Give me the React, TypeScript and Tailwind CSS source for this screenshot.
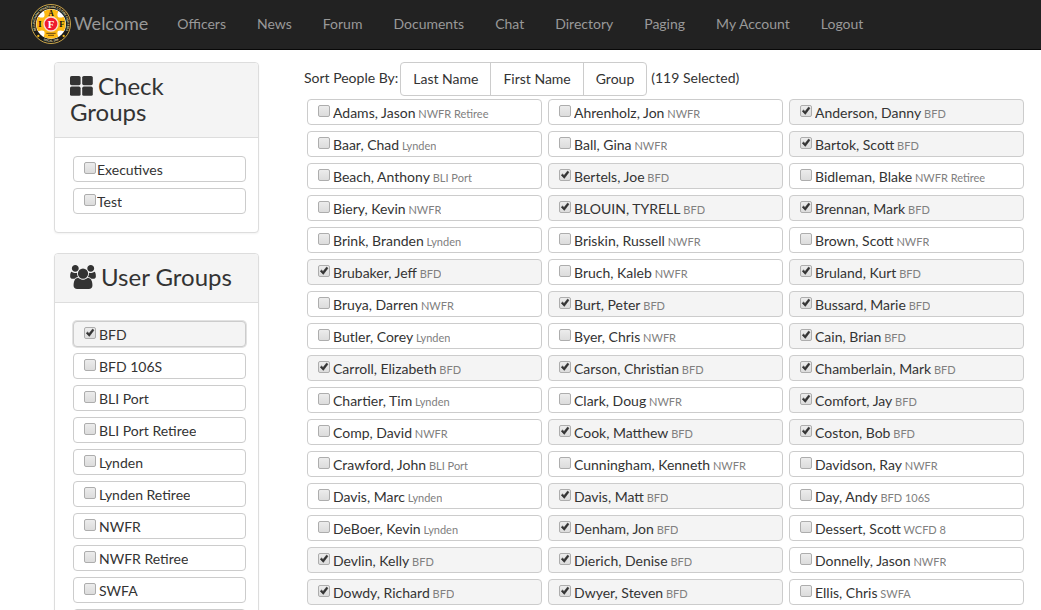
import { useState, type ReactNode } from 'react';

const navItems = ['Officers', 'News', 'Forum', 'Documents', 'Chat', 'Directory', 'Paging', 'My Account', 'Logout'];

const checkGroups = ['Executives', 'Test'];

const userGroups = [
  'BFD',
  'BFD 106S',
  'BLI Port',
  'BLI Port Retiree',
  'Lynden',
  'Lynden Retiree',
  'NWFR',
  'NWFR Retiree',
  'SWFA',
  'WCFD 8',
];

const people: [string, string][] = [
  ['Adams, Jason', 'NWFR Retiree'],
  ['Ahrenholz, Jon', 'NWFR'],
  ['Anderson, Danny', 'BFD'],
  ['Baar, Chad', 'Lynden'],
  ['Ball, Gina', 'NWFR'],
  ['Bartok, Scott', 'BFD'],
  ['Beach, Anthony', 'BLI Port'],
  ['Bertels, Joe', 'BFD'],
  ['Bidleman, Blake', 'NWFR Retiree'],
  ['Biery, Kevin', 'NWFR'],
  ['BLOUIN, TYRELL', 'BFD'],
  ['Brennan, Mark', 'BFD'],
  ['Brink, Branden', 'Lynden'],
  ['Briskin, Russell', 'NWFR'],
  ['Brown, Scott', 'NWFR'],
  ['Brubaker, Jeff', 'BFD'],
  ['Bruch, Kaleb', 'NWFR'],
  ['Bruland, Kurt', 'BFD'],
  ['Bruya, Darren', 'NWFR'],
  ['Burt, Peter', 'BFD'],
  ['Bussard, Marie', 'BFD'],
  ['Butler, Corey', 'Lynden'],
  ['Byer, Chris', 'NWFR'],
  ['Cain, Brian', 'BFD'],
  ['Carroll, Elizabeth', 'BFD'],
  ['Carson, Christian', 'BFD'],
  ['Chamberlain, Mark', 'BFD'],
  ['Chartier, Tim', 'Lynden'],
  ['Clark, Doug', 'NWFR'],
  ['Comfort, Jay', 'BFD'],
  ['Comp, David', 'NWFR'],
  ['Cook, Matthew', 'BFD'],
  ['Coston, Bob', 'BFD'],
  ['Crawford, John', 'BLI Port'],
  ['Cunningham, Kenneth', 'NWFR'],
  ['Davidson, Ray', 'NWFR'],
  ['Davis, Marc', 'Lynden'],
  ['Davis, Matt', 'BFD'],
  ['Day, Andy', 'BFD 106S'],
  ['DeBoer, Kevin', 'Lynden'],
  ['Denham, Jon', 'BFD'],
  ['Dessert, Scott', 'WCFD 8'],
  ['Devlin, Kelly', 'BFD'],
  ['Dierich, Denise', 'BFD'],
  ['Donnelly, Jason', 'NWFR'],
  ['Dowdy, Richard', 'BFD'],
  ['Dwyer, Steven', 'BFD'],
  ['Ellis, Chris', 'SWFA'],
];

function Logo() {
  return (
    <svg viewBox="0 0 120 120" className="size-10 shrink-0" aria-hidden="true">
      <defs>
        <path id="ring-top" d="M21 88 A48 48 0 1 1 99 88" />
        <path id="ring-bottom" d="M28 103 A54 54 0 0 0 92 103" />
      </defs>
      <circle cx="60" cy="60" r="58.5" fill="#1a1a18" stroke="#c9a54a" strokeWidth="3" />
      <text fill="#efe0ae" fontSize="9" fontWeight="700" fontFamily="Lato, sans-serif">
        <textPath href="#ring-top" startOffset="50%" textAnchor="middle">
          BELLINGHAM WHATCOM CO FIRE FIGHTERS
        </textPath>
      </text>
      <text fill="#f3e6bd" fontSize="9" fontWeight="700" fontFamily="Lato, sans-serif">
        <textPath href="#ring-bottom" startOffset="50%" textAnchor="middle">
          LOCAL 106
        </textPath>
      </text>
      <circle cx="22" cy="96" r="3.5" fill="#f5b81c" />
      <circle cx="98" cy="96" r="3.5" fill="#f5b81c" />
      <circle cx="60" cy="60" r="45" fill="#fff" />
      <path
        d="M38 22 Q60 10 82 22 Q77 33 81 39 Q87 43 98 38 Q110 60 98 82 Q87 77 81 81 Q77 87 82 98 Q60 110 38 98 Q43 87 39 81 Q33 77 22 82 Q10 60 22 38 Q33 43 39 39 Q43 33 38 22Z"
        fill="#fdb813"
      />
      <circle cx="60" cy="60" r="21" fill="#ee1c2e" stroke="#fbdcd2" strokeWidth="4" />
      <g fontFamily="Liberation Serif, serif" fontWeight="700" textAnchor="middle">
        <text x="60" y="37" fontSize="23" fill="#111">A</text>
        <text x="27" y="69" fontSize="26" fill="#111">I</text>
        <text x="93" y="69" fontSize="26" fill="#111">F</text>
        <text x="60" y="71" fontSize="32" fill="#fff">F</text>
      </g>
      <path d="M46 88 H74 M51 94 H69" stroke="#6b4a12" strokeWidth="3" />
    </svg>
  );
}

function GridIcon() {
  return (
    <svg viewBox="0 0 23 20" className="mr-[5px] inline-block h-5 w-[23px] align-[-1px]" fill="currentColor" aria-hidden="true">
      <rect x="0" y="0" width="10.6" height="9.2" rx="1.6" />
      <rect x="12.2" y="0" width="10.6" height="9.2" rx="1.6" />
      <rect x="0" y="10.6" width="10.6" height="9.2" rx="1.6" />
      <rect x="12.2" y="10.6" width="10.6" height="9.2" rx="1.6" />
    </svg>
  );
}

function UsersIcon() {
  return (
    <svg viewBox="0 0 1920 1792" className="mr-[5px] inline-block h-6 w-[26px] align-[-3px]" fill="currentColor" aria-hidden="true">
      <path d="M593 896q-162 5-265 128h-134q-82 0-138-40.5t-56-118.5q0-353 124-353 6 0 43.5 21t97.5 42.5 119 21.5q67 0 133-23-5 37-5 66 0 139 81 256zm1071 637q0 120-73 189.5t-194 69.5h-874q-121 0-194-69.5t-73-189.5q0-53 3.5-103.5t14-109 26.5-108.5 43-97.5 62-81 85.5-53.5 111.5-20q10 0 43 21.5t73 48 107 48 135 21.5 135-21.5 107-48 73-48 43-21.5q61 0 111.5 20t85.5 53.5 62 81 43 97.5 26.5 108.5 14 109 3.5 103.5zm-1024-1277q0 106-75 181t-181 75-181-75-75-181 75-181 181-75 181 75 75 181zm704 384q0 159-112.5 271.5t-271.5 112.5-271.5-112.5-112.5-271.5 112.5-271.5 271.5-112.5 271.5 112.5 112.5 271.5zm576 225q0 78-56 118.5t-138 40.5h-134q-103-123-265-128 81-117 81-256 0-29-5-66 66 23 133 23 59 0 119-21.5t97.5-42.5 43.5-21q124 0 124 353zm-128-609q0 106-75 181t-181 75-181-75-75-181 75-181 181-75 181 75 75 181z" />
    </svg>
  );
}

type CheckRowProps = {
  name: string;
  detail?: string;
  checked: boolean;
  onToggle: () => void;
  tight?: boolean;
  focused?: boolean;
};

function CheckRow({ name, detail, checked, onToggle, tight, focused }: CheckRowProps) {
  return (
    <label
      className={`flex h-[26px] min-w-0 cursor-pointer items-start rounded border border-[#ccc] pl-2.5 ${
        tight ? 'gap-px' : 'gap-[3px]'
      } ${checked ? 'bg-[#f4f4f4]' : 'bg-white'} ${focused ? 'ring-1 ring-[#e2e2e2]' : ''}`}
    >
      <span className="mt-[5px] grid size-3 shrink-0">
        <input
          type="checkbox"
          checked={checked}
          onChange={onToggle}
          className="col-start-1 row-start-1 size-3 appearance-none rounded-[2px] border border-[#adadad] bg-linear-to-b from-[#ececec] to-[#dcdcdc]"
        />
        {checked && (
          <svg viewBox="0 0 12 12" className="pointer-events-none col-start-1 row-start-1 size-3" aria-hidden="true">
            <path d="M2.2 6.2 L3.6 5 L5 6.4 L8.6 2 L10 3.2 L5.3 9.4 Z" fill="#333" stroke="#333" strokeWidth="0.5" />
          </svg>
        )}
      </span>
      <span className="truncate text-[14px] leading-[25px]">
        {name}
        {detail && <small className="text-[11px] text-[#808080]"> {detail}</small>}
      </span>
    </label>
  );
}

function Panel({ title, children }: { title: ReactNode; children: ReactNode }) {
  return (
    <section className="rounded border border-[#ddd] bg-white shadow-xs">
      <h2 className="rounded-t-[3px] border-b border-[#ddd] bg-[#f4f4f4] px-[15px] pt-2.5 pb-3 text-[24px] leading-[26px]">{title}</h2>
      <div className="flex flex-col gap-1.5 py-[18px] pr-3 pl-[18px]">{children}</div>
    </section>
  );
}

function toggled(set: Set<string>, key: string) {
  const next = new Set(set);
  if (!next.delete(key)) next.add(key);
  return next;
}

export default function App() {
  const [groups, setGroups] = useState(() => new Set(['BFD']));
  const [selected, setSelected] = useState(() => new Set(people.filter((p) => p[1] === 'BFD').map((p) => p[0])));

  return (
    <div className="h-screen overflow-hidden bg-white font-['Lato',sans-serif] text-[14px] text-[#333]">
      <nav className="flex h-[50px] items-center gap-px border-b border-[#080808] bg-[#222] pb-0.5 pl-[31px] text-[#999]">
        <a href="#" className="mr-[13px] flex items-center gap-[3px] text-[18px]">
          <Logo />
          Welcome
        </a>
        {navItems.map((item) => (
          <a key={item} href="#" className="px-[15px] whitespace-nowrap">
            {item}
          </a>
        ))}
      </nav>

      <div className="flex items-start gap-[45px] pt-3 pr-[17px] pl-[54px]">
        <aside className="flex w-[205px] shrink-0 flex-col gap-5">
          <Panel title={<><GridIcon />Check Groups</>}>
            {checkGroups.map((g) => (
              <CheckRow key={g} name={g} tight checked={groups.has(g)} onToggle={() => setGroups(toggled(groups, g))} />
            ))}
          </Panel>
          <Panel title={<><UsersIcon />User Groups</>}>
            {userGroups.map((g) => (
              <CheckRow
                key={g}
                name={g}
                checked={groups.has(g)}
                focused={g === 'BFD'}
                onToggle={() => setGroups(toggled(groups, g))}
              />
            ))}
          </Panel>
        </aside>

        <main className="min-w-0 flex-1">
          <div className="flex h-[34px] items-center gap-0.5">
            <span className="pb-1">Sort People By:</span>
            <div className="flex h-full divide-x divide-[#ccc] rounded border border-[#ccc]">
              <button type="button" className="px-3 pb-0.5">Last Name</button>
              <button type="button" className="px-3 pb-0.5">First Name</button>
              <button type="button" className="px-3 pb-0.5">Group</button>
            </div>
            <span className="pb-1 pl-0.5">(119 Selected)</span>
          </div>
          <div className="mt-[3px] ml-[3px] grid grid-cols-3 gap-1.5">
            {people.map(([name, group]) => (
              <CheckRow
                key={name}
                name={name}
                detail={group}
                checked={selected.has(name)}
                onToggle={() => setSelected(toggled(selected, name))}
              />
            ))}
          </div>
        </main>
      </div>
    </div>
  );
}
